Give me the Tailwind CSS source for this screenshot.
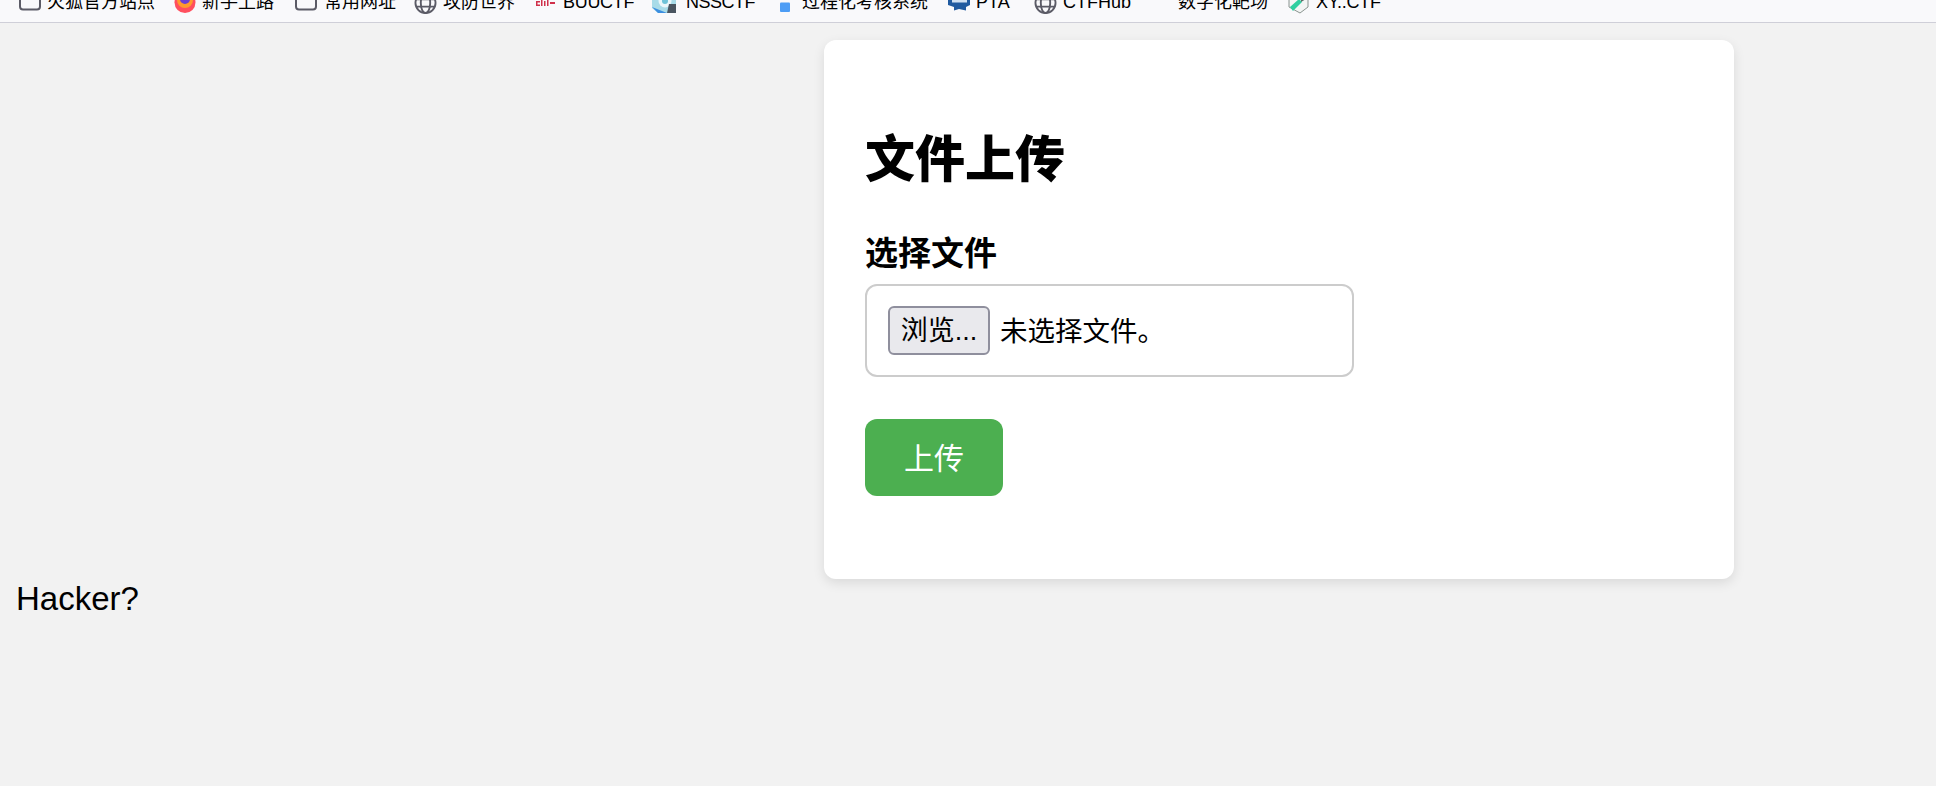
<!DOCTYPE html>
<html lang="zh-CN">
<head>
  <meta charset="UTF-8">
  <meta name="viewport" content="width=device-width, initial-scale=1.0">
  <title>文件上传</title>
  <script src="https://cdn.jsdelivr.net/npm/@tailwindcss/browser@4"></script>
</head>
<body class="bg-[#f2f2f2] text-black font-['Liberation_Sans','Noto_Sans_CJK_SC',sans-serif] min-h-screen overflow-hidden">
  <!-- 书签栏 -->
  <nav class="h-[23px] bg-[#f9f9fb] border-b border-[#cfcfd8] overflow-hidden flex items-end text-[18px] leading-[28px] whitespace-nowrap pl-[19px] pb-[6px]">
    <div class="flex items-center gap-[6px] shrink-0 w-[155px]">
      <svg class="w-[22px] h-[22px] shrink-0" viewBox="0 0 22 22" fill="none" stroke="#5b5b66" stroke-width="2"><rect x="1" y="-2" width="20" height="20.5" rx="3"/></svg>
      <span>火狐官方站点</span>
    </div>
    <div class="flex items-center gap-[6px] shrink-0 w-[121px]">
      <svg class="w-[22px] h-[22px] shrink-0" viewBox="0 0 22 22"><circle cx="11" cy="11.5" r="10.5" fill="#ff4f5e"/><circle cx="11" cy="9" r="8" fill="#ff9a2e"/><circle cx="11" cy="8" r="5" fill="#6b3fd4"/></svg>
      <span>新手上路</span>
    </div>
    <div class="flex items-center gap-[7px] shrink-0 w-[119px]">
      <svg class="w-[22px] h-[22px] shrink-0" viewBox="0 0 22 22" fill="none" stroke="#5b5b66" stroke-width="2"><rect x="1" y="-2" width="20" height="20.5" rx="3"/></svg>
      <span>常用网址</span>
    </div>
    <div class="flex items-center gap-[6px] shrink-0 w-[122px]">
      <svg class="w-[23px] h-[23px] shrink-0" viewBox="0 0 22 22" fill="none" stroke="#5b5b66" stroke-width="1.8"><circle cx="11" cy="11.5" r="9.6"/><ellipse cx="11" cy="11.5" rx="4.5" ry="9.6"/><path d="M2 8h18M2 15h18"/></svg>
      <span>攻防世界</span>
    </div>
    <div class="flex items-center gap-[8px] shrink-0 w-[115px]">
      <svg class="w-[19px] h-[22px] shrink-0" viewBox="0 0 19 22" fill="#d0304a"><path d="M0 10h4v1.5H1.5v2H4V15H0zM5 9h1.5v6H5zM8 10h1.5v5H8zM11 9h1.5v6H11zM14 11h5v2h-5z"/></svg>
      <span class="tracking-[-0.3px]">BUUCTF</span>
    </div>
    <div class="flex items-center gap-[10px] shrink-0 w-[129px]">
      <svg class="w-[25px] h-[25px] shrink-0" viewBox="0 0 25 25"><path d="M1 0h24v23H7L1 18z" fill="#a8dbe8"/><circle cx="14" cy="11" r="6.5" fill="#eaf7fa"/><circle cx="14" cy="11" r="3" fill="#6fc3d8"/><path d="M1 17l15 6H7z" fill="#3d8fe0"/><path d="M18 14h7v9h-9z" fill="#4a5560"/></svg>
      <span class="tracking-[-0.5px]">NSSCTF</span>
    </div>
    <div class="flex items-center gap-[12px] shrink-0 w-[168px]">
      <svg class="w-[10px] h-[22px] shrink-0" viewBox="0 0 10 22"><rect y="11.500" width="10" height="9.500" rx="1" fill="#4d9df5"/></svg>
      <span>过程化考核系统</span>
    </div>
    <div class="flex items-center gap-[6px] shrink-0 w-[86px]">
      <svg class="w-[22px] h-[22px] shrink-0" viewBox="0 0 22 22"><path d="M0 0h22v14l-4 2v3.500l-7-1.500-5 1.500v-3.500l-6-2z" fill="#1f5aa0"/><rect x="4" y="2" width="15" height="9.500" fill="#cfe0f2"/></svg>
      <span>PTA</span>
    </div>
    <div class="flex items-center gap-[6px] shrink-0 w-[144px]">
      <svg class="w-[23px] h-[23px] shrink-0" viewBox="0 0 22 22" fill="none" stroke="#5b5b66" stroke-width="1.8"><circle cx="11" cy="11.5" r="9.6"/><ellipse cx="11" cy="11.5" rx="4.5" ry="9.6"/><path d="M2 8h18M2 15h18"/></svg>
      <span>CTFHub</span>
    </div>
    <div class="shrink-0 w-[109px]"><span>数字化靶场</span></div>
    <div class="flex items-center gap-[6px] shrink-0">
      <svg class="w-[23px] h-[23px] shrink-0" viewBox="0 0 23 23"><path d="M2 0h19v16l-8 6-11-6z" fill="#f3f5f4" stroke="#8a9490"/><path d="M3 16l9-8 3 3-9 9z" fill="#2fcfa0"/><path d="M14 4l5 4-5 3z" fill="#5b6b66"/></svg>
      <span class="tracking-[-0.3px]">XY..CTF</span>
    </div>
  </nav>

  <main>
    <div class="pl-[824px] pt-[17px]">
      <section class="w-[910px] h-[539px] bg-white rounded-[12px] shadow-[0_4px_12px_rgba(0,0,0,0.1)] px-[41px] pt-[92px]">
        <h1 class="text-[50px] leading-[56px] font-black">文件上传</h1>
        <form class="mt-[46px]">
          <label class="block text-[33px] leading-[40px] font-bold">选择文件</label>
          <div class="mt-[10px] w-[489px] h-[93px] border-2 border-[#cccccc] rounded-[12px] flex items-center pl-[21px] text-[27.500px]">
            <button type="button" class="w-[102px] h-[49px] bg-[#e9e9ed] border-2 border-[#8f8f9d] rounded-[6px] text-center text-[27px] pt-[2px]">浏览...</button>
            <span class="ml-[10px] pt-[3px]">未选择文件。</span>
          </div>
          <button type="button" class="block mt-[42px] w-[138px] h-[77px] bg-[#4caf50] text-white text-[30px] pt-[1px] rounded-[12px]">上传</button>
        </form>
      </section>
    </div>
    <p class="pl-[16px] text-[33px] leading-[40px]">Hacker?</p>
  </main>
</body>
</html>
